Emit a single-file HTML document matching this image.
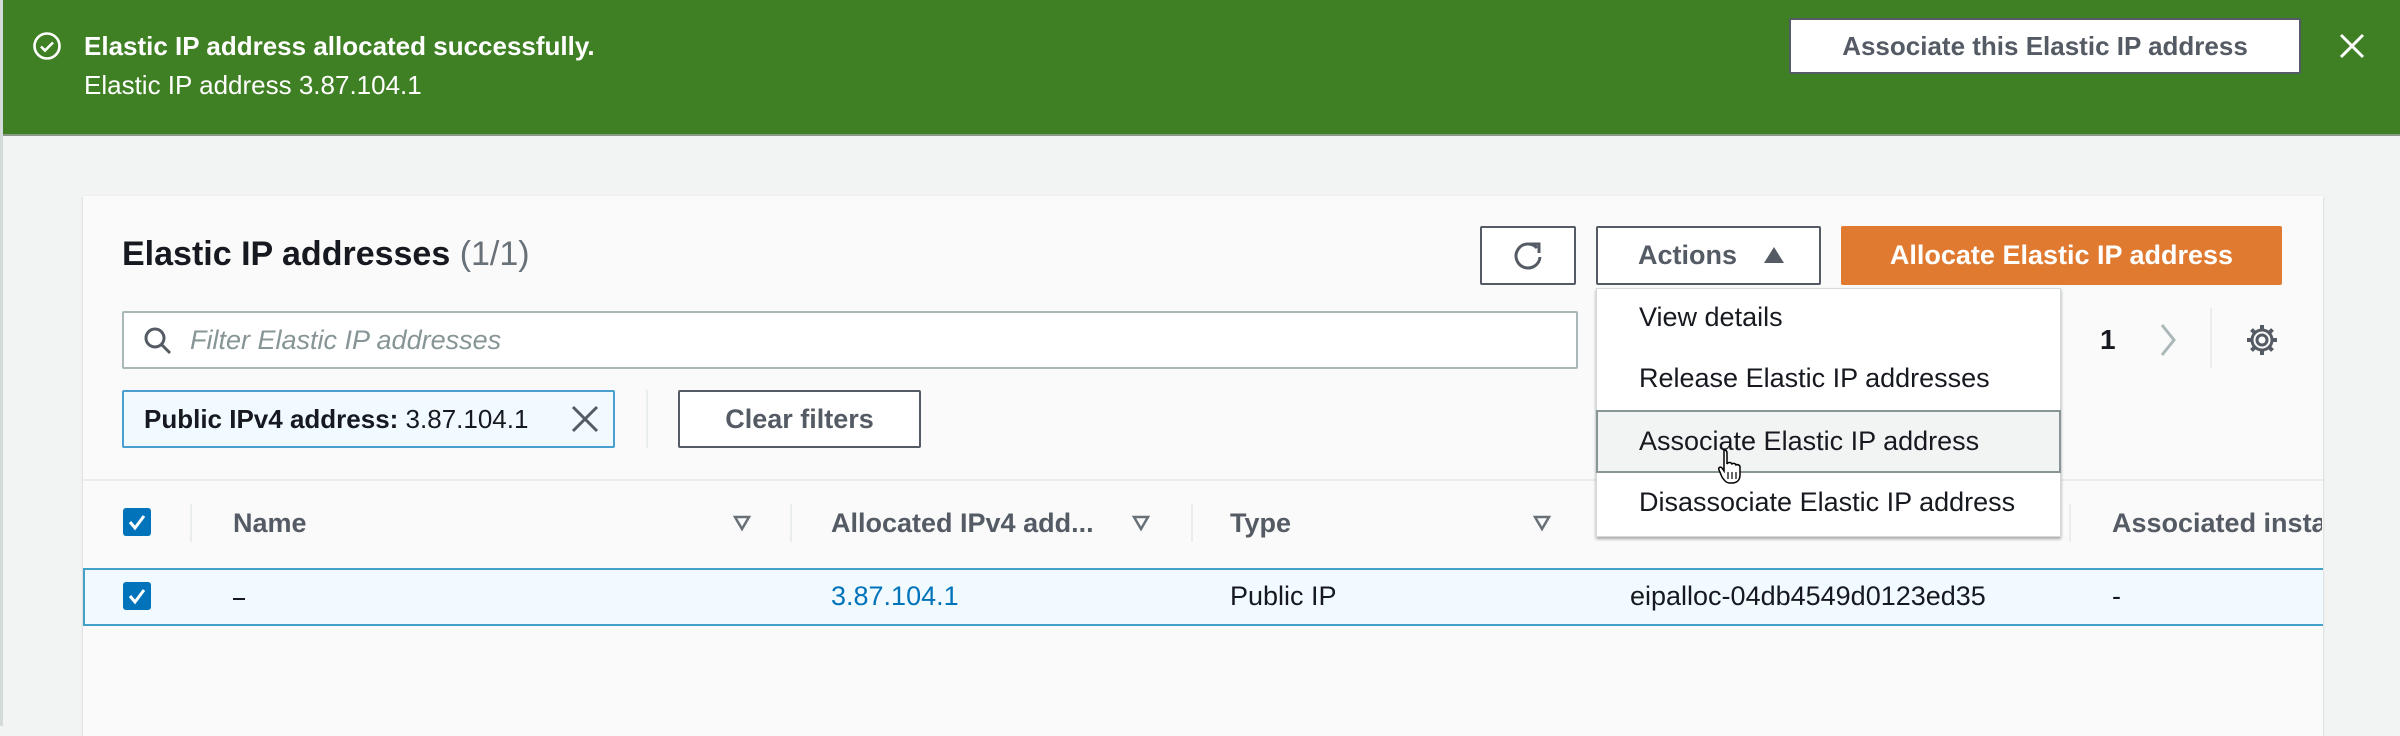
<!DOCTYPE html>
<html><head><meta charset="utf-8"><style>
*{box-sizing:border-box;margin:0;padding:0}
body{width:2400px;height:726px;overflow:hidden;background:#f2f3f3;font-family:"Liberation Sans",sans-serif;color:#16191f;position:relative}
.a{position:absolute;white-space:nowrap}
.b{font-weight:bold}
</style></head><body>
<div class="a" style="left:0;top:0;width:3px;height:726px;background:#d5dbdb"></div>
<div class="a" style="left:3px;top:0;width:2397px;height:136px;background:#3f8024;border-bottom:2px solid #8a9a86"></div>
<svg class="a" style="left:32px;top:31px" width="30" height="30" viewBox="0 0 30 30"><circle cx="15" cy="15" r="12.5" fill="none" stroke="#fff" stroke-width="2.6"/><path d="M9 15.5l4 4 8-8" fill="none" stroke="#fff" stroke-width="2.6"/></svg>
<div class="a b" style="left:84px;top:31px;font-size:26px;color:#fff">Elastic IP address allocated successfully.</div>
<div class="a" style="left:84px;top:70px;font-size:26px;color:#fff">Elastic IP address 3.87.104.1</div>
<div class="a b" style="left:1789px;top:18px;width:512px;height:56px;background:#fff;border:2px solid #545b64;border-radius:2px;font-size:26px;color:#545b64;text-align:center;line-height:52px">Associate this Elastic IP address</div>
<svg class="a" style="left:2338px;top:32px" width="28" height="28" viewBox="0 0 28 28"><path d="M3 3L25 25M25 3L3 25" stroke="#fff" stroke-width="3"/></svg>

<div class="a" style="left:83px;top:196px;width:2240px;height:540px;background:#fafafa;box-shadow:0 1px 2px rgba(0,0,0,.2)"></div>
<div class="a b" style="left:122px;top:235px;font-size:34px">Elastic IP addresses <span style="font-weight:normal;color:#687078">(1/1)</span></div>

<div class="a" style="left:1480px;top:226px;width:96px;height:59px;background:#fff;border:2px solid #545b64;border-radius:2px"></div>
<svg class="a" style="left:1510px;top:238px" width="36" height="36" viewBox="0 0 36 36"><path d="M27 10A12 12 0 1 0 30 19" fill="none" stroke="#545b64" stroke-width="3"/><path d="M20 6h9v9" fill="none" stroke="#545b64" stroke-width="3"/></svg>
<div class="a b" style="left:1596px;top:226px;width:225px;height:59px;background:#fff;border:2px solid #545b64;border-radius:2px;font-size:27px;color:#545b64;line-height:55px;padding-left:40px">Actions</div>
<svg class="a" style="left:1762px;top:245px" width="24" height="20" viewBox="0 0 24 20"><path d="M2 18L12 2L22 18z" fill="#545b64"/></svg>
<div class="a b" style="left:1841px;top:226px;width:441px;height:59px;background:#df7a30;border-radius:2px;font-size:27px;color:#fff;text-align:center;line-height:59px">Allocate Elastic IP address</div>

<div class="a" style="left:122px;top:311px;width:1456px;height:58px;background:#fff;border:2px solid #aab7b8;border-radius:2px"></div>
<svg class="a" style="left:142px;top:325px" width="32" height="32" viewBox="0 0 32 32"><circle cx="13" cy="13" r="9" fill="none" stroke="#545b64" stroke-width="3"/><path d="M20 20l8 8" stroke="#545b64" stroke-width="3"/></svg>
<div class="a" style="left:190px;top:325px;font-size:27px;font-style:italic;color:#879596">Filter Elastic IP addresses</div>

<div class="a b" style="left:2100px;top:324px;font-size:28px">1</div>
<svg class="a" style="left:2158px;top:322px" width="20" height="36" viewBox="0 0 20 36"><path d="M4 3l12 15-12 15" fill="none" stroke="#aab7b8" stroke-width="3"/></svg>
<div class="a" style="left:2210px;top:308px;width:2px;height:60px;background:#eaeded"></div>
<svg class="a" style="left:2245px;top:323px" width="34" height="34" viewBox="0 0 34 34"><circle cx="17" cy="17" r="5" fill="none" stroke="#545b64" stroke-width="3"/><path d="M17 2v6M17 26v6M2 17h6M26 17h6M6.5 6.5l4 4M23.5 23.5l4 4M6.5 27.5l4-4M23.5 10.5l4-4" stroke="#545b64" stroke-width="4"/><circle cx="17" cy="17" r="10" fill="none" stroke="#545b64" stroke-width="3"/></svg>

<div class="a" style="left:122px;top:390px;width:493px;height:58px;background:#f1faff;border:2px solid #4a9fd1;border-radius:2px"></div>
<div class="a" style="left:144px;top:404px;font-size:26px"><b>Public IPv4 address:</b> 3.87.104.1</div>
<svg class="a" style="left:570px;top:404px" width="30" height="30" viewBox="0 0 30 30"><path d="M3 3L27 27M27 3L3 27" stroke="#545b64" stroke-width="3"/></svg>
<div class="a" style="left:646px;top:390px;width:2px;height:58px;background:#eaeded"></div>
<div class="a b" style="left:678px;top:390px;width:243px;height:58px;background:#fff;border:2px solid #545b64;border-radius:2px;font-size:27px;color:#545b64;text-align:center;line-height:54px">Clear filters</div>

<div class="a" style="left:83px;top:479px;width:2240px;height:2px;background:#eaeded"></div>
<div class="a" style="left:123px;top:508px;width:28px;height:28px;background:#0073bb;border-radius:3px"></div>
<svg class="a" style="left:123px;top:508px" width="28" height="28" viewBox="0 0 28 28"><path d="M7 14l5 6 9-12" fill="none" stroke="#fff" stroke-width="3"/></svg>
<div class="a" style="left:190px;top:504px;width:2px;height:38px;background:#eaeded"></div>
<div class="a" style="left:790px;top:504px;width:2px;height:38px;background:#eaeded"></div>
<div class="a" style="left:1191px;top:504px;width:2px;height:38px;background:#eaeded"></div>
<div class="a" style="left:2069px;top:504px;width:2px;height:38px;background:#eaeded"></div>
<div class="a b" style="left:233px;top:508px;font-size:27px;color:#545b64">Name</div>
<div class="a b" style="left:831px;top:508px;font-size:27px;color:#545b64">Allocated IPv4 add...</div>
<div class="a b" style="left:1230px;top:508px;font-size:27px;color:#545b64">Type</div>
<div class="a b" style="left:2112px;top:508px;font-size:27px;color:#545b64;width:210px;overflow:hidden">Associated insta</div>
<svg class="a" style="left:732px;top:513px" width="20" height="20" viewBox="0 0 20 20"><path d="M3 4h14L10 16z" fill="none" stroke="#687078" stroke-width="2.5"/></svg>
<svg class="a" style="left:1131px;top:513px" width="20" height="20" viewBox="0 0 20 20"><path d="M3 4h14L10 16z" fill="none" stroke="#687078" stroke-width="2.5"/></svg>
<svg class="a" style="left:1532px;top:513px" width="20" height="20" viewBox="0 0 20 20"><path d="M3 4h14L10 16z" fill="none" stroke="#687078" stroke-width="2.5"/></svg>

<div class="a" style="left:83px;top:568px;width:2240px;height:58px;background:#f1faff;border:2px solid #44a0c8;border-right:none"></div>
<div class="a" style="left:123px;top:582px;width:28px;height:28px;background:#0073bb;border-radius:3px"></div>
<svg class="a" style="left:123px;top:582px" width="28" height="28" viewBox="0 0 28 28"><path d="M7 14l5 6 9-12" fill="none" stroke="#fff" stroke-width="3"/></svg>
<div class="a" style="left:233px;top:598px;width:12px;height:2px;background:#16191f"></div>
<div class="a" style="left:831px;top:581px;font-size:27px;color:#0073bb">3.87.104.1</div>
<div class="a" style="left:1230px;top:581px;font-size:27px">Public IP</div>
<div class="a" style="left:1630px;top:581px;font-size:27px">eipalloc-04db4549d0123ed35</div>
<div class="a" style="left:2112px;top:581px;font-size:27px">-</div>

<div class="a" style="left:1596px;top:288px;width:465px;height:249px;background:#fff;box-shadow:0 2px 3px rgba(0,0,0,.35);border:1px solid #d5dbdb"></div>
<div class="a" style="left:1639px;top:302px;font-size:27px">View details</div>
<div class="a" style="left:1639px;top:363px;font-size:27px">Release Elastic IP addresses</div>
<div class="a" style="left:1596px;top:410px;width:465px;height:63px;background:#f2f3f3;border:2px solid #879596"></div>
<div class="a" style="left:1639px;top:426px;font-size:27px">Associate Elastic IP address</div>
<div class="a" style="left:1639px;top:487px;font-size:27px">Disassociate Elastic IP address</div>
<svg class="a" style="left:1718px;top:448px" width="24" height="38" viewBox="0 0 24 38"><path d="M6 2c2 0 3 1 3 3v11c1-2 4-2 5 0 1-1 3-1 4 1 1-1 4 0 4 2v8c0 5-3 8-8 8h-2c-4 0-6-3-8-6L1 22c-1-2 1-4 3-2l2 3V5c0-2 0-3 0-3z" fill="#fff" stroke="#000" stroke-width="1.5"/><path d="M10 24v7M14 24v7M18 24v7" stroke="#000" stroke-width="1.2"/></svg>
</body></html>
